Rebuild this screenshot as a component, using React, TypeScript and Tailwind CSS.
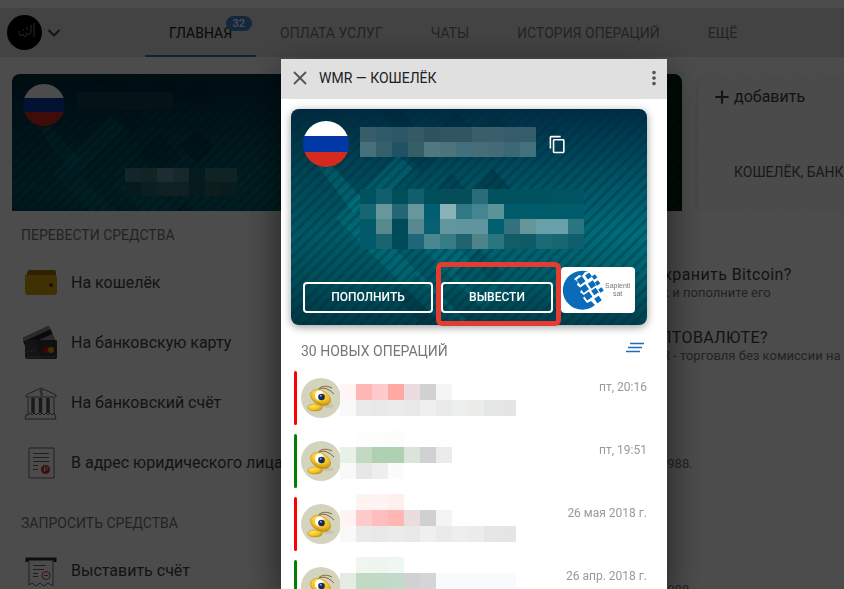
import React from "react";
import { ChevronDown, Plus, X } from "lucide-react";
import { MdContentCopy, MdMoreVert } from "react-icons/md";

type Mosaic = string[][];

function Blocks({ rows, size }: { rows: Mosaic; size: string }) {
  return (
    <div aria-hidden="true">
      {rows.map((row, r) => (
        <div key={r} className={"flex " + size}>
          {row.map((tone, c) => (
            <span key={c} className={"h-full w-4 shrink-0 " + tone} />
          ))}
        </div>
      ))}
    </div>
  );
}

function CardArt({ id }: { id: string }) {
  return (
    <svg
      viewBox="0 0 356 216"
      preserveAspectRatio="none"
      className="absolute inset-0 h-full w-full rounded-lg"
      aria-hidden="true"
    >
      <defs>
        <linearGradient id={id + "-fill"} x1="0" y1="0" x2="0" y2="1">
          <stop offset="0" stopColor="#002d47" />
          <stop offset="0.3" stopColor="#005264" />
          <stop offset="0.58" stopColor="#006e7c" />
          <stop offset="0.78" stopColor="#005f6c" />
          <stop offset="1" stopColor="#003f4e" />
        </linearGradient>
        <linearGradient id={id + "-side"} x1="0" y1="0" x2="1" y2="0">
          <stop offset="0" stopColor="#00222c" stopOpacity="0.3" />
          <stop offset="0.5" stopColor="#00222c" stopOpacity="0.12" />
          <stop offset="1" stopColor="#00222c" stopOpacity="0" />
        </linearGradient>
        <pattern id={id + "-lines"} width="8" height="8" patternUnits="userSpaceOnUse" patternTransform="rotate(45)">
          <rect width="3" height="8" fill="#002834" opacity="0.32" />
        </pattern>
      </defs>
      <rect width="356" height="216" fill={"url(#" + id + "-fill)"} />
      <rect width="356" height="216" fill={"url(#" + id + "-side)"} />
      <path d="M28 58H42L74 92 62 104Z" fill="#00a0ac" opacity="0.22" />
      <path d="M45 109 108 46 122 60 73 109 180 216H152Z" fill="#00a0ac" opacity="0.2" />
      <path d="M112 120 130 102 210 182 192 200Z" fill="#00a0ac" opacity="0.16" />
      <path d="M90 2 112 2 144 50 130 64Z" fill="#001a26" opacity="0.16" />
      <path d="M148 18 164 2 188 26 172 42Z" fill="#001a26" opacity="0.16" />
      <path d="M184 24 204 6 222 26 204 44Z" fill="#001a26" opacity="0.18" />
      <path d="M202 60 220 80 202 98 184 80Z" fill="#001a26" opacity="0.3" />
      <path d="M160 64 182 88 160 112 138 88Z" fill="#001a26" opacity="0.2" />
      <path d="M124 166 174 216H132L104 186Z" fill="#001a26" opacity="0.18" />
      <path d="M188 140 212 164 188 188 164 164Z" fill="#001a26" opacity="0.16" />
      <rect width="356" height="216" fill={"url(#" + id + "-lines)"} />
    </svg>
  );
}

function Flag({ size }: { size: string }) {
  return (
    <span className={"relative flex shrink-0 flex-col overflow-hidden rounded-full " + size}>
      <span className="flex-1 bg-white" />
      <span className="flex-1 bg-[#0039a6]" />
      <span className="flex-1 bg-[#d52b1e]" />
    </span>
  );
}

function Bee() {
  return (
    <svg viewBox="0 0 40 40" className="h-10 w-10 shrink-0" aria-hidden="true">
      <defs>
        <radialGradient id="bee" cx="0.35" cy="0.3" r="0.8">
          <stop offset="0" stopColor="#ffe65a" />
          <stop offset="0.6" stopColor="#f0c022" />
          <stop offset="1" stopColor="#b88208" />
        </radialGradient>
      </defs>
      <circle cx="20" cy="20" r="20" fill="#d4d3be" />
      <ellipse cx="27" cy="28" rx="6" ry="2" fill="#c6c4ae" />
      <path d="M17 12C19 8 25 7 31 10M17 12c5-4 11-1 16 4" fill="none" stroke="#8a6238" strokeWidth="1" />
      <ellipse cx="14" cy="29.500" rx="7.500" ry="3.500" fill="url(#bee)" stroke="#b08414" strokeWidth="0.400" />
      <ellipse cx="19.500" cy="19.500" rx="10.800" ry="7.200" transform="rotate(28 19.500 19.500)" fill="url(#bee)" stroke="#b08414" strokeWidth="0.400" />
      <ellipse cx="18.500" cy="17.500" rx="4.500" ry="5" fill="#fff" />
      <circle cx="20.500" cy="19" r="3.300" fill="#1b2a58" />
      <circle cx="19.800" cy="17.800" r="1" fill="#8ea6d8" />
    </svg>
  );
}

function WalletLogo() {
  const squares = [
    [20, 13.5, 6.5], [27.5, 9, 5], [33.5, 10, 4], [23.5, 21.5, 6.5], [31, 17.5, 6],
    [36.5, 16, 4], [27, 29, 6.5], [34, 24.5, 5.5], [40, 23, 4], [37, 32.5, 5.5],
  ];
  return (
    <svg viewBox="0 0 44 46" className="h-[46px] w-11 shrink-0" role="img" aria-label="WebMoney">
      <path d="M27 4.500A19.500 19.500 0 1 0 34 38L30 34 26 36 22 31 24 29 19 25 21 22 16 18 17 15 13 12 18 8 21 9 24 5Z" fill="#0a6cb8" />
      {squares.map(([x, y, s], i) => (
        <rect key={i} x={x - s / 2} y={y - s / 2} width={s} height={s} transform={`rotate(-35 ${x} ${y})`} fill="#0a6cb8" />
      ))}
    </svg>
  );
}

function WalletIcon() {
  return (
    <svg viewBox="0 0 36 36" className="h-9 w-9">
      <path d="M4 9a3 3 0 0 1 3-4h24a2 2 0 0 1 2 2v5H4Z" fill="#9e720a" />
      <path d="M2 8c0 2 2 2 4 2h25a3 3 0 0 1 3 3v14a3 3 0 0 1-3 3H5a3 3 0 0 1-3-3Z" fill="#d5a413" />
      <circle cx="28" cy="20" r="2" fill="#4a3b12" />
    </svg>
  );
}

function CardsIcon() {
  return (
    <svg viewBox="0 0 36 36" className="h-9 w-9">
      <g transform="rotate(-25 16 15)">
        <rect x="1" y="6" width="30" height="16" rx="2" fill="#8c8c8c" />
        <rect x="1" y="10" width="30" height="5" fill="#222" />
      </g>
      <rect x="2" y="15" width="32" height="19" rx="2" fill="#444" />
      <path d="M12 15h20a2 2 0 0 1 2 2v15a2 2 0 0 1-2 2H18Z" fill="#383838" />
      <circle cx="23" cy="25" r="3" fill="#c8161d" />
      <circle cx="28" cy="25" r="3" fill="#e9951d" />
      <path d="M4 26h9M4 32h28" stroke="#888" strokeDasharray="2 1" />
    </svg>
  );
}

function BankIcon() {
  return (
    <svg viewBox="0 0 36 36" className="h-9 w-9" fill="none" stroke="#6a6a6a">
      <path d="M3 10 18 3l15 7v2H3ZM5 13v17M31 13v17M5 30l2-2 2 2 2-2 2 2 2-2 2 2 2-2 2 2 2-2 2 2 2-2 2 2 2-2 1 2 1 4H2l1-4Z" />
      <path d="M10 13v15M17.500 13v15M25 13v15" stroke="#555" strokeWidth="3.500" />
      <path d="M20 5.500c-3-1-4 1-2 2s3 2 0 3M18 4v7" />
    </svg>
  );
}

function InvoiceIcon() {
  return (
    <svg viewBox="0 0 36 36" className="h-9 w-9" fill="none" stroke="#6a6a6a">
      <path d="M6 3h25v30H6Z" />
      <path d="M10 8.500h16M10 12.500h16M10 16.500h16M10 20.500h5M10 24.500h5" />
      <circle cx="22.500" cy="24.500" r="4.500" fill="#c8301f" stroke="none" />
      <path d="M21.500 27v-5h2a1.300 1.300 0 0 1 0 2.800h-3" stroke="#ddd" />
    </svg>
  );
}

function ReceiptIcon() {
  return (
    <svg viewBox="0 0 36 36" className="h-9 w-9" fill="none" stroke="#6a6a6a">
      <path d="M4 9V6h28v3" stroke="#2c2c2c" strokeWidth="3" />
      <path d="M6 8v24l3-2 4 3 4-3 4 3 4-3 5 3V8" />
      <path d="M10 12.500h13M10 16.500h11M10 20.500h5M10 23.500h5" />
      <circle cx="23" cy="22.500" r="4" stroke="#c04030" />
      <path d="M21 22.500h4" stroke="#c04030" />
    </svg>
  );
}

const tabs = ["ГЛАВНАЯ", "ОПЛАТА УСЛУГ", "ЧАТЫ", "ИСТОРИЯ ОПЕРАЦИЙ", "ЕЩЁ"];

const transfers = [
  { label: "На кошелёк", icon: <WalletIcon /> },
  { label: "На банковскую карту", icon: <CardsIcon /> },
  { label: "На банковский счёт", icon: <BankIcon /> },
  { label: "В адрес юридического лица", icon: <InvoiceIcon /> },
];

const e = "bg-transparent";

const numberMosaic: Mosaic = [
  ["bg-[#385d6a]", "bg-[#2e5a69]", "bg-[#2f5667]", "bg-[#365a63]", "bg-[#30525f]", "bg-[#305662]", "bg-[#305662]", "bg-[#3a5f6b]", "bg-[#3a606e]", "bg-[#365c6c]", "bg-[#355c6a]"],
  ["bg-[#47707a]", "bg-[#355f69]", "bg-[#1f5265]", "bg-[#355f66]", "bg-[#51777f]", "bg-[#4e737b]", "bg-[#406f7e]", "bg-[#466d78]", "bg-[#446b77]", "bg-[#3c6875]", "bg-[#42707b]"],
];

const balanceMosaic: Mosaic = [
  ["bg-[#005261]", "bg-[#115e6c]", "bg-[#004e5a]", "bg-[#115e6c]", "bg-[#004e5a]", "bg-[#044d59]", "bg-[#044d59]", "bg-[#2a6c77]", "bg-[#00525f]", "bg-[#00525f]", "bg-[#00525f]", "bg-[#00525f]", "bg-[#005360]", "bg-[#005360]"],
  ["bg-[#156671]", "bg-[#66979d]", "bg-[#256675]", "bg-[#66979d]", "bg-[#005f6e]", "bg-[#8bb1b8]", "bg-[#2f7884]", "bg-[#45858f]", "bg-[#5b9399]", "bg-[#005c6b]", "bg-[#005c6b]", "bg-[#005c6b]", "bg-[#005c6b]", "bg-[#005c6b]"],
  ["bg-[#005a6a]", "bg-[#58898f]", "bg-[#004b59]", "bg-[#58898f]", "bg-[#07606f]", "bg-[#62979f]", "bg-[#5f959e]", "bg-[#5f959e]", "bg-[#006070]", "bg-[#34717e]", "bg-[#659699]", "bg-[#68a0a9]", "bg-[#68a0a9]", "bg-[#297681]"],
  ["bg-[#005a69]", "bg-[#1a6370]", "bg-[#004b5a]", "bg-[#1f6778]", "bg-[#4a8791]", "bg-[#377b86]", "bg-[#226370]", "bg-[#4f838a]", "bg-[#297680]", "bg-[#125b68]", "bg-[#0f5a67]", "bg-[#1c6a76]", "bg-[#176671]", "bg-[#0f5e6d]"],
];

const smallMosaic: Mosaic = [
  ["bg-[#3d7d85]", "bg-[#3d767c]", "bg-[#5f94a0]", "bg-[#4c858c]", "bg-[#0f5963]", "bg-[#33757a]", "bg-[#33757a]"],
  ["bg-[#0f5963]", "bg-[#1f6873]", "bg-[#2f6c72]", "bg-[#2f6c72]", "bg-[#0f5963]", "bg-[#2a6266]", "bg-[#205d63]"],
];

const greyLine = ["bg-[#f9f9f8]", "bg-[#eaeaea]", "bg-[#e8e8e8]", "bg-[#ebebeb]", "bg-[#e8e8e8]", "bg-[#efefef]", "bg-[#eaeaea]", "bg-[#ecefee]", "bg-[#ececea]", "bg-[#e5e7e7]", "bg-[#e5e5e5]"];

const operations: { date: string; bar: string; rows: Mosaic }[] = [
  {
    date: "пт, 20:16",
    bar: "bg-[#ff0000]",
    rows: [[e], ["bg-[#fef5f4]", "bg-[#ffb7b6]", "bg-[#ffcacc]", "bg-[#ffa8a4]", "bg-[#ebdcdf]", "bg-[#d1d1d1]", "bg-[#f5f5f5]"], greyLine],
  },
  {
    date: "пт, 19:51",
    bar: "bg-[#008000]",
    rows: [
      [e, "bg-[#fdfdfd]", "bg-[#fdfdfc]", "bg-[#fcfcfb]"],
      ["bg-[#e8f1e6]", "bg-[#c2dac1]", "bg-[#b0d1b1]", "bg-[#b0d1b1]", "bg-[#dae4da]", "bg-[#d2d1d1]", "bg-[#ebebee]"],
      ["bg-[#f9f9f8]", "bg-[#e6e8e8]", "bg-[#efeeed]", "bg-[#f9fcfb]"],
    ],
  },
  {
    date: "26 мая 2018 г.",
    bar: "bg-[#ff0000]",
    rows: [
      [e, "bg-[#fff3f2]", "bg-[#fff4f3]", "bg-[#fff0ef]"],
      ["bg-[#fff4f3]", "bg-[#ffcacc]", "bg-[#ffbdc0]", "bg-[#ffb7b1]", "bg-[#ebdddf]", "bg-[#d0d0d0]", "bg-[#f4f4f4]"],
      greyLine,
    ],
  },
  {
    date: "26 апр. 2018 г.",
    bar: "bg-[#008000]",
    rows: [
      [e, "bg-[#f0f5f0]", "bg-[#eef5ee]", "bg-[#eff7f2]"],
      ["bg-[#e4ece3]", "bg-[#c1dac4]", "bg-[#c1dac6]", "bg-[#c1dac9]", "bg-[#d1d1d2]", "bg-[#d5d5d7]", "bg-[#f8fafc]", "bg-[#f8fafc]", "bg-[#f8fafc]", "bg-[#f8fafc]", "bg-[#f8fafc]"],
      greyLine,
    ],
  },
];

function MenuLink({ label, icon }: { label: string; icon: React.ReactNode }) {
  return (
    <a href="#" className="flex h-[60px] items-center gap-3 pl-[23px] text-base whitespace-nowrap text-[#424242]">
      {icon}
      {label}
    </a>
  );
}

function Page() {
  return (
    <div className="h-full overflow-hidden bg-white pt-2">
      <header className="flex h-[49px] overflow-hidden bg-[#e0e0e0]">
        <button className="flex w-[145px] shrink-0 items-center gap-0.5 pl-[7px]" aria-label="Профиль">
          <svg viewBox="0 0 35 35" className="h-[35px] w-[35px]">
            <circle cx="17.500" cy="17.500" r="17.500" fill="#000" />
            <path d="M12 16c0 5 1 6 4 3 1 4 4 3 4-1 1 3 4 2 4-3V10M27 8v14M20 12v3M16 14v2" fill="none" stroke="#888" />
          </svg>
          <ChevronDown className="h-5 w-5 text-[#444]" strokeWidth={2.5} />
        </button>
        <nav className="flex text-sm whitespace-nowrap text-[#757575]">
          {tabs.map((tab, i) => (
            <a
              key={tab}
              href="#"
              className={
                i === 0
                  ? "relative flex items-center border-b-2 border-[#3277c5] px-6 pt-0.5 text-[#212121]"
                  : "flex items-center px-6"
              }
            >
              {tab}
              {i === 0 && (
                <span className="absolute top-2 right-1 rounded-full bg-[#3f85cb] px-[7px] text-[11px] leading-[15px] font-medium text-white">
                  32
                </span>
              )}
            </a>
          ))}
        </nav>
      </header>

      <section className="mt-[17px] flex h-[137px] gap-4 overflow-hidden pl-3">
        <div className="relative h-[198px] w-[327px] shrink-0 rounded-lg">
          <CardArt id="back" />
          <div className="relative flex gap-3 pt-[10px] pl-[11px]">
            <Flag size="h-[42px] w-[42px]" />
            <span className="mt-2 h-[18px] w-24 bg-[#0d404f]" />
          </div>
          <div className="relative mt-[42px] pl-[113px]">
            <Blocks rows={smallMosaic} size="h-[14px]" />
          </div>
        </div>
        <div className="h-[198px] w-[327px] shrink-0 rounded-lg bg-[repeating-linear-gradient(135deg,#00280f_0_5px,#002009_5px_8px)]" />
        <div className="h-[198px] w-[327px] shrink-0 rounded-lg bg-[repeating-linear-gradient(135deg,#fbfbfb_0_5px,#f7f7f7_5px_8px)] pt-[11px] pl-[14px] shadow-[0_1px_4px_rgba(0,0,0,0.2)]">
          <button className="flex items-center gap-0.5 text-base leading-6 text-[#424242]">
            <Plus className="h-5 w-5" strokeWidth={2.5} />
            добавить
          </button>
          <p className="mt-[53px] pl-[22px] text-sm whitespace-nowrap text-[#555]">КОШЕЛЁК, БАНК</p>
        </div>
      </section>

      <main className="flex">
        <aside className="w-[299px] shrink-0 pt-[14px]">
          <h2 className="pl-[21px] text-sm leading-5 text-[#757575]">ПЕРЕВЕСТИ СРЕДСТВА</h2>
          <div className="pt-2 pb-5">
            {transfers.map((t) => (
              <MenuLink key={t.label} label={t.label} icon={t.icon} />
            ))}
          </div>
          <h2 className="pl-[21px] text-sm leading-5 text-[#757575]">ЗАПРОСИТЬ СРЕДСТВА</h2>
          <div className="pt-2">
            <MenuLink label="Выставить счёт" icon={<ReceiptIcon />} />
          </div>
        </aside>
        <div className="flex-1 overflow-hidden pt-[54px] whitespace-nowrap text-[#757575]">
          <article className="h-[63px]">
            <h3 className="pl-[365px] text-base leading-5 tracking-wide text-[#424242]">хранить Bitcoin?</h3>
            <p className="pl-[363px] text-[13px] leading-4">к и пополните его</p>
          </article>
          <article className="h-[126px]">
            <h3 className="pl-[328px] text-base leading-5 tracking-wide text-[#424242]">КРИПТОВАЛЮТЕ?</h3>
            <p className="pl-[340px] text-[13px] leading-4">WMR - торговля без комиссии на</p>
          </article>
          <p className="h-[126px] pl-[361px] text-[13px] leading-5">1988.</p>
          <p className="pl-[361px] text-[13px] leading-5">1988.</p>
        </div>
      </main>
    </div>
  );
}

function WalletDialog() {
  return (
    <div
      role="dialog"
      aria-label="WMR — КОШЕЛЁК"
      className="flex w-[386px] flex-col overflow-hidden bg-white shadow-[0_12px_36px_rgba(0,0,0,0.6)]"
    >
      <header className="flex h-10 shrink-0 items-center bg-[#e0e0e0] pr-0.5 pb-0.5 pl-2">
        <button aria-label="Закрыть">
          <X className="h-[22px] w-[22px] text-[#555]" strokeWidth={2} />
        </button>
        <h1 className="flex-1 pl-2 text-sm text-[#212121]">WMR — КОШЕЛЁК</h1>
        <button aria-label="Меню">
          <MdMoreVert className="h-[22px] w-[22px] text-[#555]" />
        </button>
      </header>

      <div className="pt-[10px] pr-5 pl-[10px]">
        <section className="relative h-[216px] rounded-lg px-3 pt-3 shadow-[0_2px_8px_rgba(0,0,0,0.4)]">
          <CardArt id="front" />
          <div className="relative flex h-[46px] items-center">
            <Flag size="h-[46px] w-[46px]" />
            <div className="pb-1 pl-[11px]">
              <Blocks rows={numberMosaic} size="h-[15px]" />
            </div>
            <button className="pl-3 text-white" aria-label="Скопировать">
              <MdContentCopy className="h-[19px] w-[19px]" />
            </button>
          </div>
          <div className="relative pt-[22px] pl-[57px]">
            <Blocks rows={balanceMosaic} size="h-[15px]" />
          </div>
          <div className="relative mt-[18px] flex items-end gap-2 text-xs font-medium text-white">
            <button className="h-[31px] w-[130px] rounded border-2 border-white pb-0.5">ПОПОЛНИТЬ</button>
            <div className="relative z-10 flex-1">
              <button className="block h-[31px] w-full rounded border-2 border-white pb-0.5">ВЫВЕСТИ</button>
              <span className="pointer-events-none absolute -top-5 -right-2 -bottom-[13px] -left-[5px] rounded-md border-[5px] border-[#e43c30]" />
            </div>
            <div className="flex h-[46px] w-[74px] items-center rounded-sm bg-white">
              <WalletLogo />
              <span className="font-['Liberation_Sans',sans-serif] text-center text-[7px] leading-2 font-normal text-[#777]">
                Sapienti
                <br />
                sat
              </span>
            </div>
          </div>
        </section>
      </div>

      <div className="flex items-center justify-between pt-4 pr-[23px] pb-[10px] pl-5">
        <h2 className="text-sm text-[#757575]">30 НОВЫХ ОПЕРАЦИЙ</h2>
        <button aria-label="Фильтр" className="pb-1.5">
          <svg viewBox="0 0 18 12" className="h-3 w-[18px]" stroke="#1a70b8" strokeWidth="1.500">
            <path d="M4 1.500h14M2 5.500h14M0 9.500h14" />
          </svg>
        </button>
      </div>

      <ul className="flex flex-col gap-[9px] pr-5 pl-[13px]">
        {operations.map((op) => (
          <li key={op.date} className="flex h-[54px]">
            <span className={"w-[3px] shrink-0 rounded-sm " + op.bar} />
            <span className="mr-[-1px] flex items-center pl-1">
              <Bee />
            </span>
            <div className="relative -mt-[3px] w-44">
              <Blocks rows={op.rows} size="h-4" />
            </div>
            <time className="flex-1 pt-2 text-right text-xs whitespace-nowrap text-[#999]">{op.date}</time>
          </li>
        ))}
      </ul>
    </div>
  );
}

export default function App() {
  return (
    <div className="h-screen overflow-hidden font-[Roboto,'Liberation_Sans',sans-serif]">
      <Page />
      <div className="fixed inset-0 flex bg-black/70 pt-[59px] pl-[281px]">
        <WalletDialog />
      </div>
    </div>
  );
}
